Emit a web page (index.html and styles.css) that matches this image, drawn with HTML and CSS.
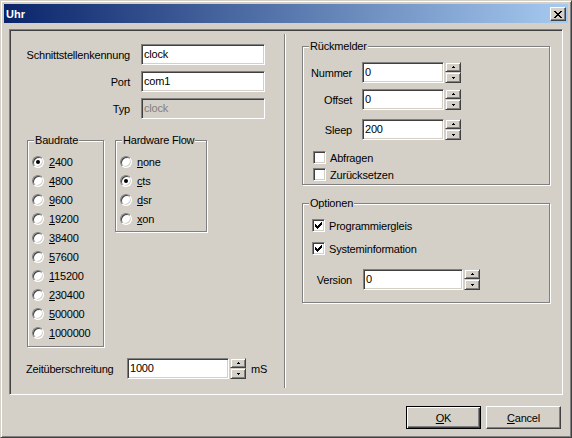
FILE: index.html
```html
<!DOCTYPE html>
<html>
<head>
<meta charset="utf-8">
<title>Uhr</title>
<link rel="stylesheet" href="styles.css">
</head>
<body>
<div class="window">
  <div class="titlebar">
    <span class="title">Uhr</span>
    <span class="close-btn">
      <svg width="8" height="7" viewBox="0 0 8 7" shape-rendering="crispEdges">
        <path d="M0 0h2v1h-2zM6 0h2v1h-2zM1 1h2v1h-2zM5 1h2v1h-2zM2 2h4v1h-4zM3 3h2v1h-2zM2 4h4v1h-4zM1 5h2v1h-2zM5 5h2v1h-2zM0 6h2v1h-2zM6 6h2v1h-2z" fill="#000"/>
      </svg>
    </span>
  </div>
  <div class="client">
    <div class="panel">
      <div class="col-left">
        <div class="form-grid">
          <span class="lbl">Schnittstellenkennung</span><div class="edit w124">clock</div>
          <span class="lbl">Port</span><div class="edit w124">com1</div>
          <span class="lbl">Typ</span><div class="edit w124 disabled">clock</div>
        </div>
        <div class="groups">
          <div class="group baud">
            <span class="group-title">Baudrate</span>
            <div class="radio-row"><span class="radio checked"></span><span><u>2</u>400</span></div>
            <div class="radio-row"><span class="radio"></span><span><u>4</u>800</span></div>
            <div class="radio-row"><span class="radio"></span><span><u>9</u>600</span></div>
            <div class="radio-row"><span class="radio"></span><span><u>1</u>9200</span></div>
            <div class="radio-row"><span class="radio"></span><span><u>3</u>8400</span></div>
            <div class="radio-row"><span class="radio"></span><span><u>5</u>7600</span></div>
            <div class="radio-row"><span class="radio"></span><span><u>1</u>15200</span></div>
            <div class="radio-row"><span class="radio"></span><span><u>2</u>30400</span></div>
            <div class="radio-row"><span class="radio"></span><span><u>5</u>00000</span></div>
            <div class="radio-row"><span class="radio"></span><span><u>1</u>000000</span></div>
          </div>
          <div class="group flow">
            <span class="group-title">Hardware Flow</span>
            <div class="radio-row"><span class="radio"></span><span><u>n</u>one</span></div>
            <div class="radio-row"><span class="radio checked"></span><span><u>c</u>ts</span></div>
            <div class="radio-row"><span class="radio"></span><span><u>d</u>sr</span></div>
            <div class="radio-row"><span class="radio"></span><span><u>x</u>on</span></div>
          </div>
        </div>
        <div class="timeout-row">
          <span class="timeout-lbl">Zeitüberschreitung</span>
          <div class="edit w102">1000</div>
          <div class="spin">
            <span class="spin-btn up"><svg width="3" height="2" viewBox="0 0 3 2" shape-rendering="crispEdges"><path d="M1 0h1v1h-1zM0 1h3v1h-3z" fill="#000"/></svg></span>
            <span class="spin-btn down"><svg width="3" height="2" viewBox="0 0 3 2" shape-rendering="crispEdges"><path d="M0 0h3v1h-3zM1 1h1v1h-1z" fill="#000"/></svg></span>
          </div>
          <span class="unit">mS</span>
        </div>
      </div>
      <div class="separator"></div>
      <div class="col-right">
        <div class="group rueck">
          <span class="group-title">Rückmelder</span>
          <div class="field-row r1">
            <span class="flbl">Nummer</span>
            <div class="edit w82">0</div>
            <div class="spin">
              <span class="spin-btn up"><svg width="3" height="2" viewBox="0 0 3 2" shape-rendering="crispEdges"><path d="M1 0h1v1h-1zM0 1h3v1h-3z" fill="#000"/></svg></span>
              <span class="spin-btn down"><svg width="3" height="2" viewBox="0 0 3 2" shape-rendering="crispEdges"><path d="M0 0h3v1h-3zM1 1h1v1h-1z" fill="#000"/></svg></span>
            </div>
          </div>
          <div class="field-row r2">
            <span class="flbl">Offset</span>
            <div class="edit w82">0</div>
            <div class="spin">
              <span class="spin-btn up"><svg width="3" height="2" viewBox="0 0 3 2" shape-rendering="crispEdges"><path d="M1 0h1v1h-1zM0 1h3v1h-3z" fill="#000"/></svg></span>
              <span class="spin-btn down"><svg width="3" height="2" viewBox="0 0 3 2" shape-rendering="crispEdges"><path d="M0 0h3v1h-3zM1 1h1v1h-1z" fill="#000"/></svg></span>
            </div>
          </div>
          <div class="field-row r3">
            <span class="flbl">Sleep</span>
            <div class="edit w82">200</div>
            <div class="spin">
              <span class="spin-btn up"><svg width="3" height="2" viewBox="0 0 3 2" shape-rendering="crispEdges"><path d="M1 0h1v1h-1zM0 1h3v1h-3z" fill="#000"/></svg></span>
              <span class="spin-btn down"><svg width="3" height="2" viewBox="0 0 3 2" shape-rendering="crispEdges"><path d="M0 0h3v1h-3zM1 1h1v1h-1z" fill="#000"/></svg></span>
            </div>
          </div>
          <div class="check-row ra"><span class="check"></span><span>Abfragen</span></div>
          <div class="check-row rb"><span class="check"></span><span>Zurücksetzen</span></div>
        </div>
        <div class="group opt">
          <span class="group-title">Optionen</span>
          <div class="check-row oa"><span class="check checked"><svg width="7" height="7" viewBox="0 0 7 7" shape-rendering="crispEdges"><path d="M6 0h1v1h-1zM5 1h2v1h-2zM0 2h1v1h-1zM4 2h3v1h-3zM0 3h2v1h-2zM3 3h3v1h-3zM0 4h5v1h-5zM1 5h3v1h-3zM2 6h1v1h-1z" fill="#000"/></svg></span><span>Programmiergleis</span></div>
          <div class="check-row ob"><span class="check checked"><svg width="7" height="7" viewBox="0 0 7 7" shape-rendering="crispEdges"><path d="M6 0h1v1h-1zM5 1h2v1h-2zM0 2h1v1h-1zM4 2h3v1h-3zM0 3h2v1h-2zM3 3h3v1h-3zM0 4h5v1h-5zM1 5h3v1h-3zM2 6h1v1h-1z" fill="#000"/></svg></span><span>Systeminformation</span></div>
          <div class="field-row ov">
            <span class="flbl wide">Version</span>
            <div class="edit w100">0</div>
            <div class="spin">
              <span class="spin-btn up"><svg width="3" height="2" viewBox="0 0 3 2" shape-rendering="crispEdges"><path d="M1 0h1v1h-1zM0 1h3v1h-3z" fill="#000"/></svg></span>
              <span class="spin-btn down"><svg width="3" height="2" viewBox="0 0 3 2" shape-rendering="crispEdges"><path d="M0 0h3v1h-3zM1 1h1v1h-1z" fill="#000"/></svg></span>
            </div>
          </div>
        </div>
      </div>
    </div>
    <div class="buttons">
      <span class="btn default"><u>O</u>K</span>
      <span class="btn"><u>C</u>ancel</span>
    </div>
  </div>
</div>
</body>
</html>
```
FILE: styles.css
```css
* { box-sizing: border-box; }
html, body { margin: 0; padding: 0; }
body {
  width: 572px;
  height: 438px;
  overflow: hidden;
  background: #d4d0c8;
  font-family: "Liberation Sans", Arial, sans-serif;
  font-size: 11px;
  letter-spacing: -0.2px;
  color: #000;
}
u { text-decoration: underline; text-underline-offset: 1px; }

.window {
  width: 572px;
  height: 438px;
  border: 1px solid;
  border-color: #d4d0c8 #404040 #404040 #d4d0c8;
  box-shadow: inset 1px 1px #fff, inset -1px -1px #808080;
  padding: 3px;
  display: flex;
  flex-direction: column;
}

.titlebar {
  height: 19px;
  flex: none;
  background: linear-gradient(90deg, #0a246a 0%, #a6caf0 100%);
  display: flex;
  align-items: center;
  justify-content: space-between;
  padding: 0 2px 0 2px;
}
.title {
  color: #fff;
  font-weight: bold;
  font-size: 11px;
  letter-spacing: 0;
}
.close-btn {
  width: 16px;
  height: 14px;
  margin-top: 1px;
  background: #d4d0c8;
  border: 1px solid;
  border-color: #fff #404040 #404040 #fff;
  box-shadow: inset -1px -1px #808080;
  display: flex;
  align-items: center;
  justify-content: center;
}

.client {
  flex: 1;
  display: flex;
  flex-direction: column;
}

.panel {
  margin: 6px 0 0 5px;
  width: 554px;
  height: 366px;
  border: 1px solid;
  border-color: #808080 #fff #fff #808080;
  box-shadow: inset 1px 1px #404040, inset -1px -1px #d4d0c8;
  padding: 1px;
  display: flex;
}

.col-left {
  width: 273px;
  flex: none;
  padding-top: 13px;
}
.separator {
  width: 2px;
  flex: none;
  border-left: 1px solid #808080;
  border-right: 1px solid #fff;
  margin: 3px 0 5px;
}
.col-right {
  flex: 1;
  padding: 15px 0 0 16px;
}

.form-grid {
  display: grid;
  grid-template-columns: 119px 124px;
  column-gap: 11px;
  row-gap: 6px;
  align-items: center;
}
.lbl { text-align: right; }

.edit {
  height: 21px;
  border: 1px solid;
  border-color: #808080 #fff #fff #808080;
  box-shadow: inset 1px 1px #404040, inset -1px -1px #d4d0c8;
  background: #fff;
  padding-left: 2px;
  line-height: 19px;
  white-space: nowrap;
}
.edit.disabled { background: #d4d0c8; color: #808080; }
.w124 { width: 124px; }
.w102 { width: 102px; }
.w82 { width: 82px; }
.w100 { width: 100px; }

.groups {
  display: flex;
  align-items: flex-start;
  gap: 11px;
  margin-top: 21px;
  padding-left: 16px;
}
.group {
  position: relative;
  border: 1px solid #808080;
  box-shadow: inset 1px 1px #fff, 1px 1px #fff;
}
.group-title {
  position: absolute;
  top: -7px;
  left: 6px;
  padding: 0 1px;
  line-height: 13px;
  background: #d4d0c8;
  white-space: nowrap;
}
.baud { width: 77px; height: 207px; padding: 11px 0 0 4px; }
.flow { width: 92px; height: 92px; padding: 11px 0 0 4px; }

.radio-row {
  height: 19px;
  display: flex;
  align-items: center;
  gap: 5px;
}
.radio {
  width: 12px;
  height: 12px;
  flex: none;
  border-radius: 50%;
  border: 1px solid;
  border-color: #808080 #fff #fff #808080;
  box-shadow: inset 1px 1px #404040, inset -1px -1px #d4d0c8;
  background: #fff;
  position: relative;
}
.radio.checked::after {
  content: "";
  position: absolute;
  left: 3px;
  top: 3px;
  width: 4px;
  height: 4px;
  border-radius: 50%;
  background: #000;
}

.timeout-row {
  display: flex;
  align-items: center;
  margin-top: 11px;
  padding-left: 15px;
}
.timeout-lbl { width: 101px; flex: none; }
.unit { margin-left: 5px; }

.spin {
  width: 16px;
  height: 21px;
  margin-left: 1px;
  display: flex;
  flex-direction: column;
  flex: none;
}
.spin-btn {
  background: #d4d0c8;
  border: 1px solid;
  border-color: #d4d0c8 #404040 #404040 #d4d0c8;
  box-shadow: inset 1px 1px #fff, inset -1px -1px #808080;
  display: flex;
  align-items: center;
  justify-content: center;
}
.spin-btn.up { height: 10px; }
.spin-btn.down { height: 11px; }

.rueck { width: 248px; padding: 15px 0 1px 0; }
.opt { width: 248px; margin-top: 18px; padding: 13px 0 12px 0; }

.field-row {
  display: flex;
  align-items: center;
}
.flbl { width: 49px; text-align: right; margin-right: 10px; flex: none; }
.flbl.wide { margin-right: 11px; }
.r2 { margin-top: 6px; }
.r3 { margin-top: 9px; }

.check-row {
  height: 17px;
  display: flex;
  align-items: center;
  gap: 4px;
}
.ra { margin-top: 9px; padding-left: 10px; }
.rb { padding-left: 10px; }
.oa { padding-left: 9px; }
.ob { margin-top: 6px; padding-left: 9px; }
.ov { margin-top: 12px; }

.check {
  width: 13px;
  height: 13px;
  flex: none;
  border: 1px solid;
  border-color: #808080 #fff #fff #808080;
  box-shadow: inset 1px 1px #404040, inset -1px -1px #d4d0c8;
  background: #fff;
  display: flex;
  align-items: center;
  justify-content: center;
}

.buttons {
  display: flex;
  justify-content: flex-end;
  gap: 5px;
  margin-top: 11px;
  padding-right: 7px;
}
.btn {
  width: 75px;
  height: 23px;
  display: flex;
  align-items: center;
  justify-content: center;
  background: #d4d0c8;
  border: 1px solid;
  border-color: #fff #404040 #404040 #fff;
  box-shadow: inset -1px -1px #808080;
}
.btn.default {
  border: 1px solid #000;
  box-shadow: inset 1px 1px #fff, inset -1px -1px #404040, inset -2px -2px #808080;
}
```
